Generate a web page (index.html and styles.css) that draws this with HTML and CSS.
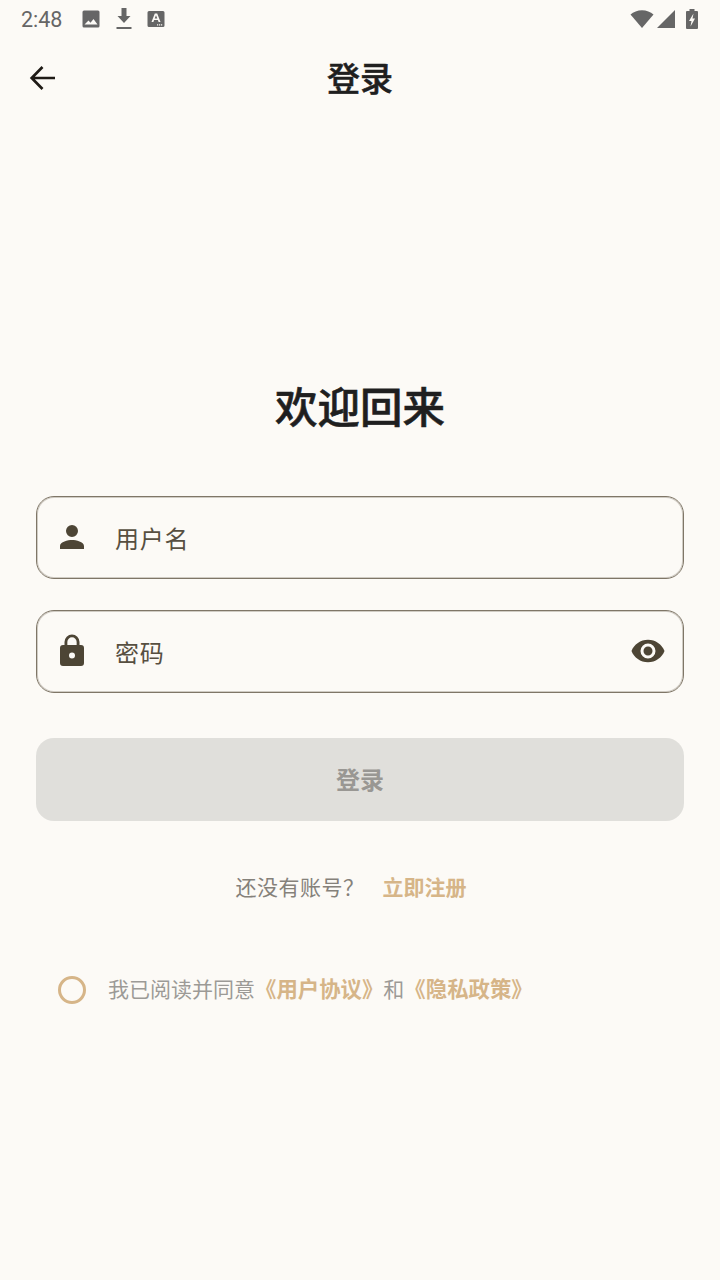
FILE: index.html
```html
<!DOCTYPE html>
<html lang="zh-CN">
<head>
    <meta charset="UTF-8">
    <meta name="viewport" content="width=device-width, initial-scale=1.0">
    <title>登录</title>
    <link rel="stylesheet" href="styles.css">
</head>
<body>
    <div class="status-bar">
        <span class="time">2:48</span>
        <div class="status-left">
            <svg class="s-icon" width="20" height="20" viewBox="0 0 20 20"><path fill="#666" fill-rule="evenodd" d="M3 1.500h14A1.500 1.500 0 0 1 18.500 3v14a1.500 1.500 0 0 1-1.500 1.500H3A1.500 1.500 0 0 1 1.500 17V3A1.500 1.500 0 0 1 3 1.500zM3.500 15.500h13l-4-5.500-3 3.800-2-2.300z"/></svg>
            <svg class="s-icon" width="20" height="24" viewBox="0 0 20 24"><path fill="#666" d="M7.500 1h5v8h4L10 16 3.500 9h4zM2.500 20h15v2h-15z"/></svg>
            <svg class="s-icon" width="18" height="18" viewBox="0 0 18 18"><path fill="#666" fill-rule="evenodd" d="M2 1h14a1.500 1.500 0 0 1 1.500 1.500v13A1.500 1.500 0 0 1 16 17H2a1.500 1.500 0 0 1-1.500-1.500v-13A1.500 1.500 0 0 1 2 1zM7.800 3.500 4.500 12h1.900l.7-2h3.800l.7 2h1.900L10.200 3.500zM7.700 8.400 9 5.300l1.300 3.100zM10 14.200h1.200v1.200H10zM12 14.200h1.200v1.200H12zM14 14.200h1.200v1.200H14z"/></svg>
        </div>
        <div class="status-right">
            <svg width="24" height="20" viewBox="0 0 24 20"><path fill="#666" d="M0.500 5.500C3.500 2.800 7.500 1.200 12 1.200s8.500 1.600 11.500 4.300L12 19z"/></svg>
            <svg class="signal" width="20" height="20" viewBox="0 0 20 20"><path fill="#666" d="M19 1v18H1z"/></svg>
            <svg width="14" height="22" viewBox="0 0 14 22"><path fill="#666" fill-rule="evenodd" d="M4.500 1h5v2H12a1 1 0 0 1 1 1v16a1 1 0 0 1-1 1H2a1 1 0 0 1-1-1V4a1 1 0 0 1 1-1h2.500zM8.500 5.500 4 13h2.500l-1 5.500L10 10.500H7.500z"/></svg>
        </div>
    </div>

    <header class="app-bar">
        <svg class="back" width="30" height="30" viewBox="0 0 30 30"><path fill="none" stroke="#1f1b16" stroke-width="2.700" d="M27 15H4.500M14.500 4 3.700 15l10.800 11"/></svg>
        <h1 class="page-title">登录</h1>
    </header>

    <main class="content">
        <h2 class="welcome">欢迎回来</h2>

        <div class="field">
            <svg class="field-icon" width="36" height="36" viewBox="0 0 24 24"><path fill="#4d4535" d="M12 12a4 4 0 1 0 0-8 4 4 0 0 0 0 8zm0 2c-2.700 0-8 1.300-8 4v2h16v-2c0-2.700-5.300-4-8-4z"/></svg>
            <span class="field-label">用户名</span>
        </div>

        <div class="field field-password">
            <svg class="field-icon" width="36" height="36" viewBox="0 0 24 24"><path fill="#4d4535" d="M18 8h-1V6a5 5 0 0 0-10 0v2H6a2 2 0 0 0-2 2v10a2 2 0 0 0 2 2h12a2 2 0 0 0 2-2V10a2 2 0 0 0-2-2zm-6 9a2 2 0 1 1 0-4 2 2 0 0 1 0 4zM8.900 8V6a3.100 3.100 0 0 1 6.200 0v2z"/></svg>
            <span class="field-label">密码</span>
            <svg class="eye" width="36" height="36" viewBox="0 0 24 24"><path fill="#4d4535" d="M12 4.500C7 4.500 2.700 7.600 1 12c1.700 4.400 6 7.500 11 7.500s9.300-3.100 11-7.500c-1.700-4.400-6-7.500-11-7.500zM12 17a5 5 0 1 1 0-10 5 5 0 0 1 0 10zm0-8a3 3 0 1 0 0 6 3 3 0 0 0 0-6z"/></svg>
        </div>

        <button class="login-btn">登录</button>

        <p class="register">还没有账号？<a class="register-link">立即注册</a></p>

        <div class="agree">
            <span class="radio"></span>
            <p class="agree-text">我已阅读并同意<b>《用户协议》</b>和<b>《隐私政策》</b></p>
        </div>
    </main>
</body>
</html>
```

FILE: styles.css
```css
body {
    margin: 0;
    height: 1280px;
    overflow: hidden;
    background-color: #fcfaf6;
    font-family: "Roboto", "Noto Sans CJK SC", sans-serif;
    color: #1f1f1f;
}
.status-bar {
    height: 38px;
    display: flex;
    align-items: center;
    padding: 0 21px;
}
.time {
    font-size: 21.500px;
    color: #666;
    width: 60px;
}
.status-left {
    display: flex;
    align-items: center;
    gap: 13px;
}
.status-right {
    margin-left: auto;
    display: flex;
    align-items: center;
    gap: 2px;
}
.signal {
    margin-right: 7px;
}
.app-bar {
    height: 84px;
    display: flex;
    align-items: center;
    justify-content: center;
    position: relative;
}
.back {
    position: absolute;
    left: 28px;
    top: 25px;
}
.page-title {
    margin: 0;
    font-size: 33px;
    font-weight: 500;
    -webkit-text-stroke: 0.500px #1f1f1f;
    line-height: 84px;
}
.content {
    padding: 0 36px;
    display: flex;
    flex-direction: column;
}
.welcome {
    margin: 257px 0 57px;
    height: 60px;
    line-height: 60px;
    font-size: 42.500px;
    font-weight: 500;
    -webkit-text-stroke: 0.600px #1f1f1f;
    text-align: center;
}
.field {
    height: 83px;
    box-sizing: border-box;
    border: 1px solid #7f7667;
    box-shadow: inset 0 0 0 1px rgba(127, 118, 103, 0.35);
    border-radius: 18px;
    display: flex;
    align-items: center;
    padding: 0 17px;
    margin-bottom: 31px;
}
.field-icon,
.eye {
    flex: none;
    margin-top: -2px;
}
.field-label {
    margin-left: 25px;
    font-size: 24px;
    letter-spacing: 0.700px;
    color: #574f41;
}
.eye {
    margin-left: auto;
}
.login-btn {
    margin-top: 14px;
    height: 83px;
    padding-bottom: 4px;
    border: none;
    border-radius: 18px;
    background-color: #e0dfdb;
    color: #999793;
    font-family: inherit;
    font-size: 24px;
    font-weight: 600;
}
.register {
    margin: 51px 0 0;
    text-align: center;
    font-size: 21px;
    line-height: 32px;
    letter-spacing: 0.500px;
    color: #85817a;
}
.register-link {
    padding: 0 18px;
    color: #d6b588;
    font-size: 21px;
    font-weight: 600;
    letter-spacing: 0;
}
.agree {
    margin-top: 70px;
    padding-left: 22px;
    display: flex;
    align-items: center;
    gap: 22px;
}
.radio {
    width: 22px;
    height: 22px;
    border: 3px solid #d6b588;
    border-radius: 50%;
}
.agree-text {
    margin: 0;
    font-size: 21px;
    line-height: 32px;
    color: #9c9a96;
}
.agree-text b {
    color: #d6b588;
    font-size: 21.400px;
    font-weight: 600;
}
```
